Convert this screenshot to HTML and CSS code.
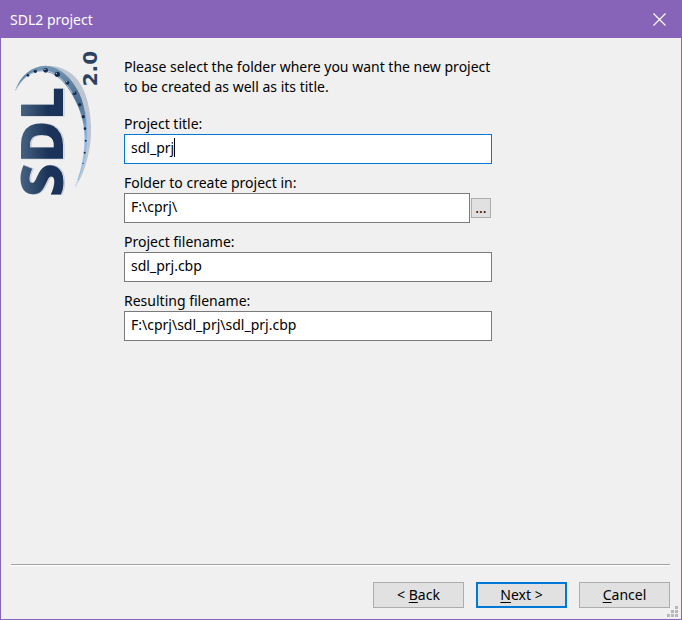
FILE: index.html
```html
<!DOCTYPE html>
<html lang="en">

<head>
    <meta charset="UTF-8">
    <meta name="viewport" content="width=device-width, initial-scale=1.0">
    <title>SDL2 project</title>
    <link rel="stylesheet" href="styles.css">
</head>

<body>

    <div class="dialog">

        <header class="title-bar">
            <h1>SDL2 project</h1>
            <button type="button" class="close-btn" aria-label="Close">
                <svg width="13" height="13" viewBox="0 0 13 13">
                    <path d="M0.5 0.5 L12.5 12.5 M12.5 0.5 L0.5 12.5" fill="none" stroke="#fff" stroke-width="1.2"/>
                </svg>
            </button>
        </header>

        <form class="wizard">

            <div class="page">

                <svg class="logo" width="104" height="165" viewBox="0 0 312 495" role="img" aria-label="SDL 2.0">
                    <defs>
                        <linearGradient id="letters" x1="0" y1="0" x2="0" y2="1">
                            <stop offset="0.2" stop-color="#4c6987"/>
                            <stop offset="0.6" stop-color="#1b3358"/>
                        </linearGradient>
                        <linearGradient id="band" x1="0" y1="0" x2="0" y2="1">
                            <stop offset="0" stop-color="#7396b4"/>
                            <stop offset="0.3" stop-color="#4a6c90"/>
                            <stop offset="0.6" stop-color="#8fb8e0"/>
                            <stop offset="1" stop-color="#d4dde8"/>
                        </linearGradient>
                    </defs>
                    <!-- swoosh -->
                    <path d="M128 79 C195 70 238 110 257 165 C275 220 279 290 264 347 C255 387 242 418 224 444 C244 402 256 355 258 305 C260 245 239 173 199 122 C178 94 158 84 128 79 Z" fill="#bdc5d0"/>
                    <path d="M45 153 C61 106 94 78 137 77 C180 80 214 112 237 158 C258 203 264 264 260 320 C256 367 244 409 223 442 C240 402 250 360 253 312 C257 258 244 211 215 161 C193 124 168 100 137 95 C98 88 68 113 45 153 Z" fill="url(#band)"/>
                    <path d="M47 151 C66 113 95 91 137 92 C172 98 196 125 217 159" fill="none" stroke="#b4c8da" stroke-width="3"/>
                    <path d="M256 215 C266 280 259 352 234 420" fill="none" stroke="#8eb9e6" stroke-width="3"/>
                    <g fill="#152c50">
                        <circle cx="84" cy="106" r="4"/>
                        <circle cx="106" cy="94" r="5"/>
                        <circle cx="137" cy="91" r="7"/>
                        <circle cx="172" cy="103" r="8"/>
                        <circle cx="202" cy="128" r="6"/>
                        <circle cx="224" cy="159" r="6"/>
                        <circle cx="239" cy="194" r="5"/>
                        <circle cx="250" cy="230" r="5"/>
                        <circle cx="255" cy="266" r="4"/>
                        <circle cx="257" cy="302" r="3"/>
                        <circle cx="254" cy="338" r="3"/>
                        <circle cx="249" cy="370" r="2"/>
                    </g>
                    <g fill="#dce7f2">
                        <circle cx="135" cy="88" r="2"/>
                        <circle cx="169" cy="100" r="2"/>
                        <circle cx="200" cy="125" r="2"/>
                        <circle cx="222" cy="156" r="2"/>
                    </g>
                    <text class="logo-name logo-shadow" transform="translate(193 471) rotate(-90)">SDL</text>
                    <text class="logo-name" transform="translate(189 471) rotate(-90)" fill="url(#letters)">SDL</text>
                    <text class="logo-version" transform="translate(290 139) rotate(-90)">2.0</text>
                </svg>

                <div class="fields">

                    <p class="intro">Please select the folder where you want the new project<br>to be created as well as its title.</p>

                    <div class="field">
                        <label for="project-title">Project title:</label>
                        <div class="input-row">
                            <input type="text" id="project-title" class="active" value="sdl_prj" spellcheck="false">
                            <span class="caret"></span>
                        </div>
                    </div>

                    <div class="field">
                        <label for="project-folder">Folder to create project in:</label>
                        <div class="input-row">
                            <input type="text" id="project-folder" value="F:\cprj\" spellcheck="false">
                            <button type="button" class="browse-btn" aria-label="Browse">...</button>
                        </div>
                    </div>

                    <div class="field">
                        <label for="project-file">Project filename:</label>
                        <div class="input-row">
                            <input type="text" id="project-file" value="sdl_prj.cbp" spellcheck="false">
                        </div>
                    </div>

                    <div class="field">
                        <label for="result-file">Resulting filename:</label>
                        <div class="input-row">
                            <input type="text" id="result-file" value="F:\cprj\sdl_prj\sdl_prj.cbp" spellcheck="false">
                        </div>
                    </div>

                </div>

            </div>

            <footer class="buttons">
                <button type="button" class="btn">&lt; <u>B</u>ack</button>
                <button type="submit" class="btn btn-default"><u>N</u>ext &gt;</button>
                <button type="button" class="btn"><u>C</u>ancel</button>
            </footer>

        </form>

        <svg class="grip" width="11" height="11" viewBox="0 0 11 11" fill="#b8b8b8">
            <path d="M8 0h3v3h-3z M4 4h3v3h-3z M8 4h3v3h-3z M0 8h3v3h-3z M4 8h3v3h-3z M8 8h3v3h-3z"/>
        </svg>

    </div>

</body>

</html>
```
FILE: styles.css
```css
* {
    box-sizing: border-box;
}

body {
    margin: 0;
    font-family: "Noto Sans", "Open Sans", sans-serif;
    font-size: 14px;
    line-height: 20px;
    color: #000;
}

button, input {
    font: inherit;
    color: inherit;
    border-radius: 0;
}

.dialog {
    position: relative;
    display: flex;
    flex-direction: column;
    min-height: 100vh;
    border: 1px solid #8764b8;
    background-color: #f0f0f0;
}

/* Title bar */
.title-bar {
    display: flex;
    justify-content: space-between;
    align-items: center;
    height: 37px;
    padding-left: 9px;
    background-color: #8764b8;
    color: white;
}

.title-bar h1 {
    margin: 0;
    font-size: 14px;
    font-weight: normal;
}

.close-btn {
    display: flex;
    justify-content: center;
    align-items: center;
    width: 44px;
    height: 36px;
    padding: 0;
    border: none;
    background: none;
}

.wizard {
    display: flex;
    flex-direction: column;
    flex: 1;
    padding: 0 11px 11px 10px;
}

.page {
    display: flex;
    flex: 1;
    align-items: flex-start;
    gap: 20px;
    border-bottom: 1px solid #a0a0a0;
    box-shadow: 0 1px 0 white;
}

/* Logo */
.logo {
    flex: none;
    margin: 2px 0 0 -11px;
}

.logo-name {
    font-family: "Open Sans", "Noto Sans", sans-serif;
    font-size: 175px;
    font-weight: 800;
}

.logo-shadow {
    fill: none;
    stroke: #c3cbd5;
    stroke-width: 3px;
}

.logo-version {
    font-family: "DejaVu Sans", sans-serif;
    font-size: 60px;
    font-weight: bold;
    fill: #2c4260;
}

/* Fields */
.fields {
    flex: 1;
    max-width: 368px;
    padding: 19px 0 16px;
}

.intro {
    margin: 0 0 17px;
    white-space: nowrap;
}

.field {
    margin-bottom: 9px;
}

.field label {
    display: block;
}

.input-row {
    position: relative;
    display: flex;
    align-items: center;
    gap: 1px;
}

.input-row input {
    flex: 1;
    min-width: 0;
    height: 30px;
    padding: 0 6px 4px;
    border: 1px solid #7a7a7a;
    background-color: white;
    outline: none;
}

.input-row input.active,
.input-row input:focus {
    border-color: #0078d7;
}

.caret {
    position: absolute;
    left: 50px;
    top: 4px;
    width: 1px;
    height: 19px;
    background-color: black;
}

.browse-btn {
    width: 20px;
    height: 20px;
    margin-right: 1px;
    padding: 0;
    border: 1px solid #adadad;
    background-color: #e1e1e1;
    line-height: 18px;
}

/* Bottom buttons */
.buttons {
    display: flex;
    justify-content: flex-end;
    gap: 12px;
    padding-top: 17px;
}

.btn {
    width: 91px;
    height: 26px;
    padding: 0;
    border: 1px solid #adadad;
    background-color: #e1e1e1;
}

.btn u {
    text-underline-offset: 2px;
}

.btn-default {
    border: 2px solid #0078d7;
}

.btn:hover,
.browse-btn:hover {
    background-color: #e5f1fb;
}

.grip {
    position: absolute;
    right: 3px;
    bottom: 2px;
}
```
